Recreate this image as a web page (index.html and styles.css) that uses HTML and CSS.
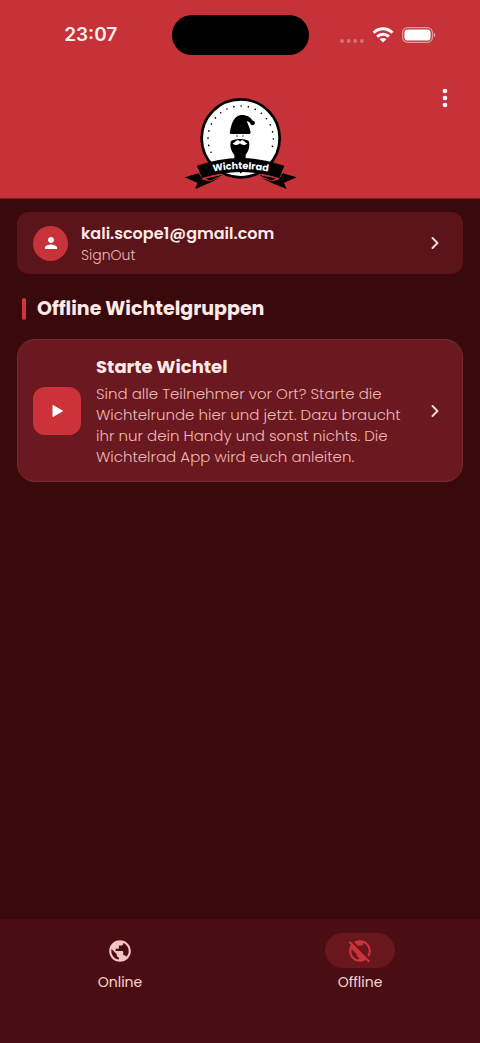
FILE: index.html
```
<!DOCTYPE html>
<html lang="de">
<head>
    <meta charset="UTF-8">
    <meta name="viewport" content="width=device-width, initial-scale=1.0">
    <title>Wichtelrad</title>
    <link rel="stylesheet" href="styles.css">
</head>

<body>
    <header class="header">
        <div class="status">
            <div class="time">23:07</div>
            <div class="island"></div>
            <div class="status-icons">
                <svg class="signal" viewBox="0 0 24 4" fill="#fff" fill-opacity=".3">
                    <circle cx="2" cy="2" r="2" /><circle cx="8.6" cy="2" r="2" />
                    <circle cx="15.2" cy="2" r="2" /><circle cx="21.8" cy="2" r="2" />
                </svg>
                <svg class="wifi" viewBox="0 0 22 16" fill="none" stroke="#fff" stroke-width="3">
                    <path d="M1.6 5.8C7 .4 15 .4 20.4 5.8" />
                    <path d="M5.1 9.6C8.5 6.4 13.5 6.4 16.9 9.6" />
                    <path d="M11 15.6L7.7 12.3C9.6 10.6 12.4 10.6 14.3 12.3z" fill="#fff" stroke="none" />
                </svg>
                <svg class="battery" viewBox="0 0 34 16">
                    <rect x=".6" y=".6" width="29.8" height="14.8" rx="5" fill="none" stroke="#fff" stroke-opacity=".5" stroke-width="1.2" />
                    <rect x="2.4" y="2.4" width="26.2" height="11.2" rx="3.4" fill="#fff" />
                    <path d="M31.8 5.5c1.9.7 1.9 4.3 0 5z" fill="#fff" fill-opacity=".55" />
                </svg>
            </div>
        </div>
        <svg class="logo" viewBox="40 22 339 279" role="img" aria-label="Wichtelrad">
            <circle cx="210" cy="146" r="117" fill="#fff" stroke="#000" stroke-width="8" />
            <path d="M121 188A98 98 0 1 1 299 188" fill="none" stroke="#000" stroke-width="5" stroke-linecap="round" stroke-dasharray="0 21.9" />
            <!-- Mütze -->
            <path d="M178 126C182 100 192 80 207 77C224 74 240 82 246 93A7 7 0 1 1 240 104C238 99 233 95 228 95C232 104 237 114 239 124Q242 133 234 133H183Q174 133 178 126z" />
            <!-- Augen, Bart -->
            <circle cx="199" cy="139" r="2" /><circle cx="217" cy="139" r="2" />
            <path d="M180 156C186 145 230 145 235 156C239 178 229 188 225 196V220H191V196C187 188 176 178 180 156z" />
            <path d="M186 160C192 162 194 152 202 152Q206 152 208 156Q210 152 214 152C222 152 224 162 230 160C226 168 214 168 208 161C202 168 190 168 186 160z" fill="#fff" />
            <!-- Band -->
            <path d="M42 263L84 251L96 270L118 275L152 262L118 279L107 284L74 298L80 279z" />
            <path d="M378 263L336 251L324 270L302 275L268 262L302 279L313 284L348 298L340 279z" />
            <path d="M104 266Q128 254 154 257L118 273z" />
            <path d="M316 266Q292 254 266 257L302 273z" />
            <path d="M79 228Q210 182 341 228L326 266Q210 228 94 266z" />
            <path d="M97 267Q120 260 146 256M323 267Q300 260 274 256" fill="none" stroke="#c73239" stroke-width="4" />
            <circle cx="210" cy="248" r="3" />
            <path id="bogen" d="M80 258Q210 218 340 258" fill="none" />
            <text class="logo-text"><textPath href="#bogen" startOffset="50%">Wichtelrad</textPath></text>
        </svg>
        <button class="menu" aria-label="Menü">
            <svg viewBox="0 0 6 20" fill="#fff">
                <circle cx="3" cy="3" r="2.3" /><circle cx="3" cy="10" r="2.3" /><circle cx="3" cy="17" r="2.3" />
            </svg>
        </button>
    </header>

    <main class="content">
        <button class="card account">
            <span class="avatar">
                <svg viewBox="0 0 24 24" fill="#fff"><path d="M12 12c2.21 0 4-1.79 4-4s-1.79-4-4-4-4 1.79-4 4 1.79 4 4 4zm0 2c-2.67 0-8 1.34-8 4v2h16v-2c0-2.66-5.33-4-8-4z" /></svg>
            </span>
            <span class="text">
                <span class="mail">kali.scope1@gmail.com</span>
                <span class="signout">SignOut</span>
            </span>
            <svg class="arrow" viewBox="0 0 8 14"><path d="M1.5 2L6.5 7L1.5 12" /></svg>
        </button>

        <h1 class="title">Offline Wichtelgruppen</h1>

        <button class="card start">
            <span class="play">
                <svg viewBox="0 0 12 14" fill="#fff" stroke="#fff" stroke-linejoin="round"><path d="M2 1.5V12.5L11.5 7z" /></svg>
            </span>
            <span class="text">
                <span class="start-title">Starte Wichtel</span>
                <span class="start-text">Sind alle Teilnehmer vor Ort? Starte die Wichtelrunde hier und jetzt. Dazu braucht ihr nur dein Handy und sonst nichts. Die Wichtelrad App wird euch anleiten.</span>
            </span>
            <svg class="arrow" viewBox="0 0 8 14"><path d="M1.5 2L6.5 7L1.5 12" /></svg>
        </button>
    </main>

    <nav class="tabs">
        <a class="tab" href="#online">
            <span class="pill">
                <svg viewBox="0 0 24 24"><path d="M12 2C6.48 2 2 6.48 2 12s4.48 10 10 10 10-4.48 10-10S17.52 2 12 2zm-1 17.93c-3.95-.49-7-3.85-7-7.93 0-.62.08-1.21.21-1.79L9 15v1c0 1.1.9 2 2 2v1.93zm6.9-2.54c-.26-.81-1-1.39-1.9-1.39h-1v-3c0-.55-.45-1-1-1H8v-2h2c.55 0 1-.45 1-1V7h2c1.1 0 2-.9 2-2v-.41c2.93 1.19 5 4.06 5 7.41 0 2.08-.8 3.97-2.1 5.39z" /></svg>
            </span>
            Online
        </a>
        <a class="tab active" href="#offline">
            <span class="pill">
                <svg viewBox="0 0 24 24"><path d="M11 8.17L6.49 3.66C8.07 2.61 9.96 2 12 2c5.52 0 10 4.48 10 10 0 2.04-.61 3.93-1.66 5.51l-1.46-1.46C19.59 14.87 20 13.48 20 12c0-3.35-2.07-6.22-5-7.41V5c0 1.1-.9 2-2 2h-2v1.17zM21.19 21.19l-1.41 1.41-2.27-2.27C15.93 21.39 14.04 22 12 22 6.48 22 2 17.52 2 12c0-2.04.61-3.93 1.66-5.51L1.39 4.22l1.41-1.41L21.19 21.19zM11 18c-1.1 0-2-.9-2-2v-1l-4.79-4.79C4.08 10.79 4 11.38 4 12c0 4.08 3.05 7.44 7 7.93V18z" /></svg>
            </span>
            Offline
        </a>
    </nav>
</body>

</html>
```
FILE: styles.css
```
* {
    box-sizing: border-box;
}

body {
    margin: 0;
    min-height: 100vh;
    display: flex;
    flex-direction: column;
    background: #3a090c;
    color: #fdeae7;
    font-family: Poppins, Inter, sans-serif;
}

button {
    border: none;
    background: none;
    padding: 0;
    color: inherit;
    font-family: inherit;
    text-align: left;
    cursor: pointer;
}

svg {
    display: block;
}

.header {
    position: relative;
    background: #c73238;
    padding: 15px 0 8px;
    border-bottom: 1px solid #7a1d22;
}

.status {
    display: grid;
    grid-template-columns: 1fr 137px 1fr;
    align-items: center;
}

.time {
    font-family: Inter, sans-serif;
    font-size: 19px;
    line-height: 24px;
    font-weight: 600;
    text-align: center;
    padding-left: 10px;
    color: #fff0ee;
}

.island {
    height: 40px;
    border-radius: 20px;
    background: #000;
}

.status-icons {
    display: flex;
    align-items: center;
    justify-content: flex-end;
    gap: 8px;
    padding-right: 44px;
}

.signal {
    width: 24px;
    height: 4px;
    margin-top: 11px;
}

.wifi {
    width: 22px;
    height: 16px;
}

.battery {
    width: 34px;
    height: 16px;
}

.logo {
    width: 113px;
    height: 93px;
    margin: 42px auto 0;
}

.logo-text {
    font-size: 29px;
    font-weight: 700;
    text-anchor: middle;
    fill: #fff;
}

.menu {
    position: absolute;
    right: 32px;
    top: 88px;
}

.menu svg {
    width: 6px;
    height: 20px;
}

.content {
    flex: 1;
    padding: 13px 17px;
}

.card {
    display: flex;
    align-items: center;
    width: 100%;
}

.account {
    gap: 13px;
    padding: 10px 24px 10px 16px;
    border-radius: 12px;
    background: #5a141a;
}

.avatar {
    width: 35px;
    height: 35px;
    border-radius: 50%;
    background: #c8323a;
    display: grid;
    place-items: center;
}

.avatar svg {
    width: 18px;
    height: 18px;
}

.text {
    flex: 1;
    display: flex;
    flex-direction: column;
}

.mail {
    font-size: 16px;
    line-height: 24px;
    font-weight: 600;
}

.signout {
    font-size: 14px;
    line-height: 18px;
    font-weight: 300;
    color: #f0bab7;
}

.arrow {
    width: 8px;
    height: 14px;
    fill: none;
    stroke: #fbd5d0;
    stroke-width: 2;
    stroke-linecap: round;
    stroke-linejoin: round;
}

.title {
    display: flex;
    align-items: center;
    gap: 11px;
    margin: 21px 5px 16px;
    font-size: 19px;
    line-height: 28px;
    font-weight: 700;
}

.title::before {
    content: "";
    width: 4px;
    height: 22px;
    border-radius: 2px;
    background: #d0343d;
}

.start {
    gap: 15px;
    padding: 14px 23px 14px 15px;
    border: 1px solid #7b2a31;
    border-radius: 18px;
    background: #6a1920;
}

.play {
    width: 48px;
    height: 48px;
    border-radius: 12px;
    background: #cb323a;
    display: grid;
    place-items: center;
}

.play svg {
    width: 12px;
    height: 14px;
}

.start-title {
    font-size: 18px;
    line-height: 26px;
    font-weight: 700;
    margin-bottom: 3px;
}

.start-text {
    font-size: 15px;
    line-height: 21px;
    font-weight: 300;
    color: #f0b8b5;
}

.tabs {
    display: flex;
    height: 124px;
    padding-top: 14px;
    background: #490d12;
}

.tab {
    flex: 1;
    display: flex;
    flex-direction: column;
    align-items: center;
    gap: 4px;
    font-size: 14px;
    line-height: 20px;
    color: #fbd5d2;
    text-decoration: none;
}

.pill {
    width: 70px;
    height: 35px;
    border-radius: 18px;
    display: grid;
    place-items: center;
}

.pill svg {
    width: 26px;
    height: 26px;
    fill: #f3c4c2;
}

.active .pill {
    background: #69161c;
}

.active .pill svg {
    fill: #cb343c;
}
```
